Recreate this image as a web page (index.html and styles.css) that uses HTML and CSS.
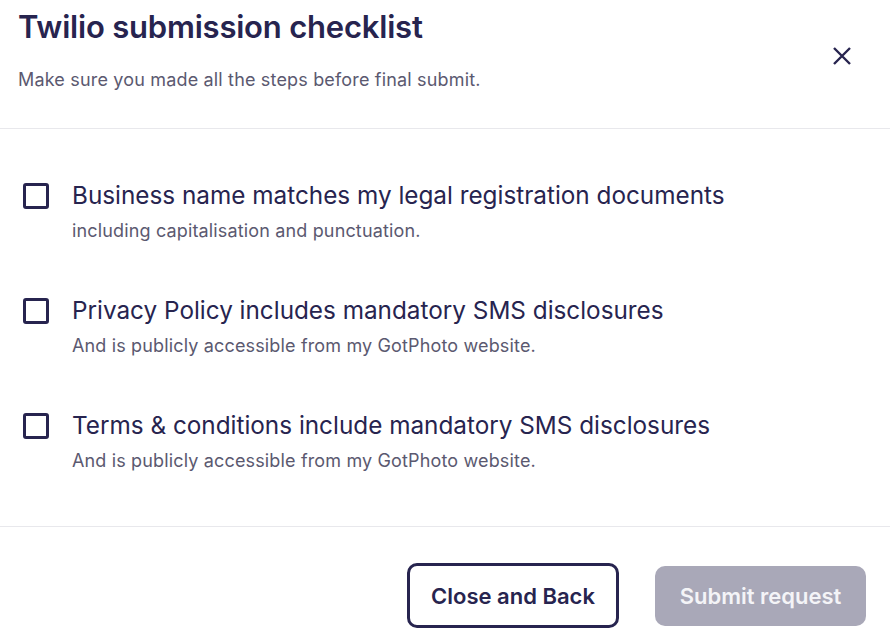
FILE: index.html
```html
<!DOCTYPE html>
<html lang="en">
<head>
  <meta charset="UTF-8" />
  <meta name="viewport" content="width=device-width, initial-scale=1.0"/>
  <title>Twilio submission checklist</title>
  <link rel="stylesheet" href="styles.css">
</head>
<body>
  <div class="modal">
    <header class="modal-header">
      <div class="titles">
        <h1>Twilio submission checklist</h1>
        <p>Make sure you made all the steps before final submit.</p>
      </div>
      <button class="close" aria-label="Close">
        <svg width="20" height="20" viewBox="0 0 20 20">
          <path d="M2 2 L18 18 M18 2 L2 18" stroke="#27244f" stroke-width="2.4" fill="none"/>
        </svg>
      </button>
    </header>

    <div class="checklist">
      <label class="item">
        <input type="checkbox" />
        <span class="box"></span>
        <span class="text">
          <span class="label">Business name matches my legal registration documents</span>
          <span class="hint">including capitalisation and punctuation.</span>
        </span>
      </label>
      <label class="item">
        <input type="checkbox" />
        <span class="box"></span>
        <span class="text">
          <span class="label">Privacy Policy includes mandatory SMS disclosures</span>
          <span class="hint">And is publicly accessible from my GotPhoto website.</span>
        </span>
      </label>
      <label class="item">
        <input type="checkbox" />
        <span class="box"></span>
        <span class="text">
          <span class="label">Terms &amp; conditions include mandatory SMS disclosures</span>
          <span class="hint">And is publicly accessible from my GotPhoto website.</span>
        </span>
      </label>
    </div>

    <footer class="modal-footer">
      <button class="btn btn-outline">Close and Back</button>
      <button class="btn btn-disabled" disabled>Submit request</button>
    </footer>
  </div>
</body>
</html>
```

FILE: styles.css
```css
body {
  font-family: Inter, "Noto Sans", sans-serif;
  background-color: #ffffff;
  color: #27244f;
  margin: 0;
  padding: 0;
}
.modal {
  width: 890px;
  height: 641px;
  overflow: hidden;
}
.modal-header {
  display: flex;
  justify-content: space-between;
  align-items: flex-start;
  padding: 8px 38px 0 18px;
  height: 129px;
  border-bottom: 1px solid #e8e8ec;
  box-sizing: border-box;
}
.modal-header h1 {
  margin: 0;
  font-size: 31px;
  font-weight: 600;
  line-height: 38px;
  letter-spacing: -0.2px;
}
.modal-header p {
  margin: 22px 0 0;
  font-size: 18px;
  letter-spacing: 0.17px;
  color: #5b5970;
  line-height: 24px;
}
.close {
  background: none;
  border: none;
  padding: 0;
  margin-top: 38px;
  cursor: pointer;
}
.close svg {
  display: block;
}
.checklist {
  display: flex;
  flex-direction: column;
  gap: 52px;
  padding: 51px 22px 0 23px;
  height: 398px;
  box-sizing: border-box;
  border-bottom: 1px solid #e8e8ec;
}
.item {
  display: flex;
  align-items: flex-start;
  gap: 23px;
  cursor: pointer;
}
.item input {
  display: none;
}
.box {
  width: 20px;
  height: 20px;
  border: 3px solid #27244f;
  border-radius: 3px;
  margin-top: 3px;
  flex-shrink: 0;
}
.text {
  display: flex;
  flex-direction: column;
}
.label {
  font-size: 24.3px;
  line-height: 30px;
}
.hint {
  font-size: 18px;
  letter-spacing: 0.15px;
  line-height: 24px;
  margin-top: 9px;
  color: #5b5970;
}
.modal-footer {
  display: flex;
  justify-content: flex-end;
  align-items: center;
  gap: 36px;
  padding: 36px 24px 0 0;
}
.btn {
  font-family: Inter, "Noto Sans", sans-serif;
  font-size: 22px;
  font-weight: 600;
  border-radius: 10px;
  cursor: pointer;
}
.btn-outline {
  background: #ffffff;
  color: #27244f;
  border: 3px solid #27244f;
  width: 212px;
  height: 65px;
}
.btn-disabled {
  background: #a9a8b8;
  color: #f4f4f7;
  border: none;
  width: 211px;
  height: 60px;
  cursor: default;
}
```
